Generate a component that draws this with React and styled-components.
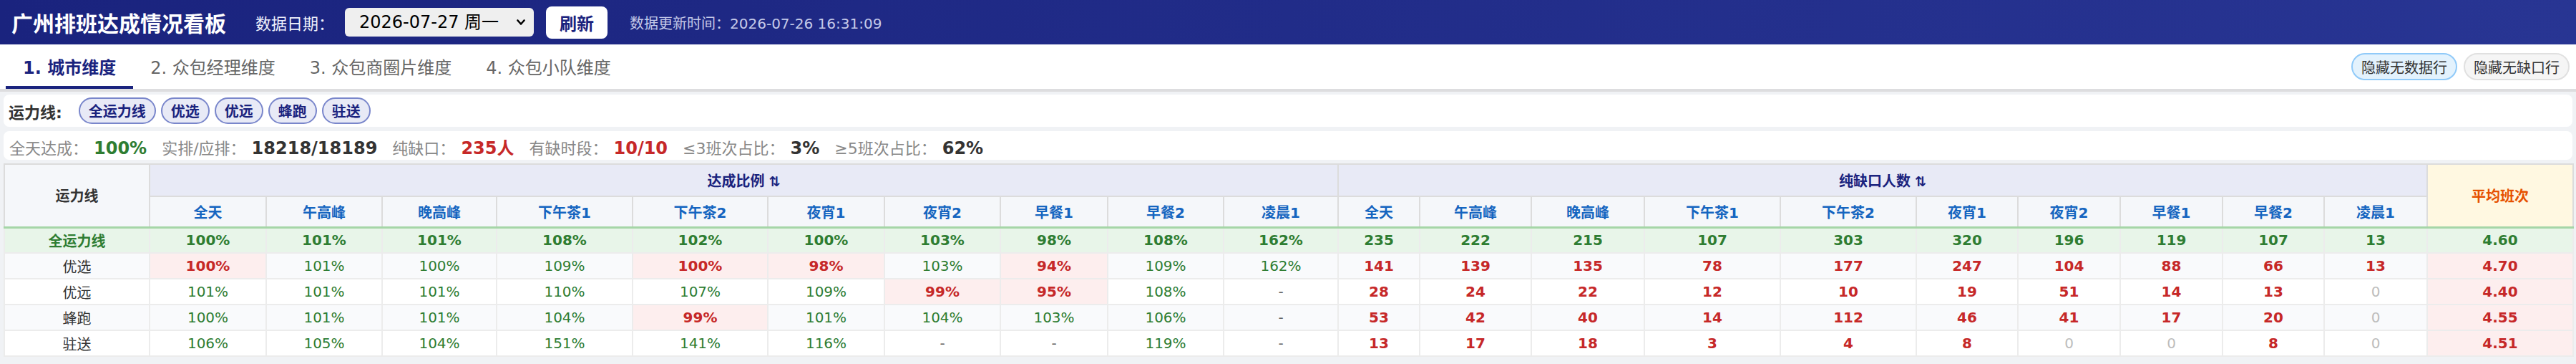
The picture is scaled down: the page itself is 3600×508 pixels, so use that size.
import React from "react";
import styled, { createGlobalStyle, css } from "styled-components";

const GlobalStyle = createGlobalStyle`
  html, body { margin: 0; padding: 0; background: #f0f2f5; }
  body {
    font-family: "DejaVu Sans", "Noto Sans CJK SC", sans-serif;
    color: #333;
  }
  * { box-sizing: border-box; }
`;

const Page = styled.div`
  width: 3600px;
  min-height: 508px;
  background: #f0f2f5;
`;

const Header = styled.header`
  height: 62px;
  display: flex;
  align-items: center;
  padding: 0 16px;
  background: linear-gradient(90deg, #1a237e 0%, #283593 100%);
  color: #fff;
`;

const Title = styled.h1`
  margin: 0 41px 0 0;
  font-size: 30px;
  font-weight: 700;
  white-space: nowrap;
`;

const DateLabel = styled.span`
  font-size: 22px;
  color: #eef0fb;
  margin-right: 15px;
`;

const SelectBox = styled.div`
  position: relative;
  width: 264px;
  height: 40px;
`;

const DateSelect = styled.select`
  appearance: none;
  width: 100%;
  height: 100%;
  border: none;
  border-radius: 6px;
  background: #efefef;
  color: #000;
  font-family: inherit;
  font-size: 24px;
  padding: 0 30px 0 20px;
  outline: none;
`;

const Chevron = styled.svg`
  position: absolute;
  right: 12px;
  top: 15px;
  width: 12px;
  height: 10px;
  pointer-events: none;
`;

const RefreshButton = styled.button`
  margin-left: 17px;
  height: 45px;
  padding: 0 19px;
  border: none;
  border-radius: 8px;
  background: #fff;
  color: #1a237e;
  font-family: inherit;
  font-size: 24px;
  font-weight: 700;
`;

const UpdateTime = styled.span`
  margin-left: 31px;
  font-size: 20px;
  color: #c5cae9;
  white-space: nowrap;
`;

const TabBar = styled.nav`
  height: 66px;
  display: flex;
  align-items: stretch;
  padding: 0 9px 0 8px;
  background: #fff;
  border-bottom: 4px solid #dddddf;
`;

const Tab = styled.div`
  display: flex;
  align-items: center;
  padding: 3px 24px 0;
  font-size: 24px;
  white-space: nowrap;
  border-bottom: 4px solid transparent;
  color: #666;
  ${(p) =>
    p.$active &&
    css`
      color: #1a237e;
      font-weight: 700;
      border-bottom-color: #1a237e;
    `}
`;

const Toggles = styled.div`
  margin-left: auto;
  display: flex;
  align-items: center;
  gap: 9px;
`;

const ToggleButton = styled.button`
  height: 38px;
  padding: 0 12px;
  border-radius: 19px;
  font-family: inherit;
  font-size: 20px;
  color: #333;
  border: 2px solid ${(p) => (p.$on ? "#90caf9" : "#e0e0e0")};
  background: ${(p) => (p.$on ? "#e3f2fd" : "#f5f5f5")};
`;

const Content = styled.main`
  padding: 4px 5px 10px;
  display: flex;
  flex-direction: column;
`;

const Card = styled.section`
  background: #fff;
  border-radius: 8px;
  display: flex;
  align-items: center;
`;

const FilterCard = styled(Card)`
  height: 45px;
  padding: 0 7px;
  gap: 7px;
`;

const FilterLabel = styled.span`
  font-size: 22px;
  font-weight: 700;
  color: #333;
  margin-right: 16px;
`;

const Pill = styled.button`
  height: 37px;
  padding: 0 12px;
  border-radius: 19px;
  border: 2px solid #7986cb;
  background: #e8eaf6;
  color: #1a237e;
  font-family: inherit;
  font-size: 20px;
  font-weight: 700;
`;

const StatsCard = styled(Card)`
  margin-top: 6px;
  height: 40px;
  padding: 0 8px;
  align-items: baseline;
  padding-top: 4px;
`;

const StatLabel = styled.span`
  font-size: 22px;
  color: #888;
  margin-right: 8px;
`;

const StatValue = styled.span`
  font-size: 24px;
  font-weight: 700;
  margin-right: 21px;
  color: ${(p) => p.$color || "#333"};
`;

const TableWrap = styled.div`
  margin-top: 5px;
  background: #fff;
`;

const Table = styled.table`
  width: 3590px;
  table-layout: fixed;
  border-collapse: collapse;
  border: 2px solid #dcdcdc;
  font-size: 20px;
  text-align: center;
`;

const GroupTh = styled.th`
  height: 45px;
  background: #e8eaf6;
  color: #1a237e;
  font-weight: 700;
  border: 2px solid #dcdcdc;
  padding: 0;
`;

const SortIcon = styled.span`
  font-size: 19px;
  margin-left: 6px;
`;

const CornerTh = styled.th`
  background: ${(p) => (p.$avg ? "#fff8e1" : "#f5f7fa")};
  color: ${(p) => (p.$avg ? "#e65100" : "#333")};
  font-weight: 700;
  border: 2px solid #dcdcdc;
  padding: 0;
`;

const SubTh = styled.th`
  height: 43px;
  background: #f5f7fa;
  color: #1565c0;
  font-weight: 700;
  border: 2px solid #dcdcdc;
  padding: 0;
`;

const tones = {
  total: css`
    color: #2e7d32;
    font-weight: 700;
  `,
  good: css`
    color: #2e7d32;
  `,
  alert: css`
    color: #c62828;
    font-weight: 700;
    background: #fdeeee;
  `,
  short: css`
    color: #c62828;
    font-weight: 700;
  `,
  zero: css`
    color: #bdbdbd;
  `,
  dash: css`
    color: #666;
  `,
  name: css`
    color: #333;
  `,
};

const Row = styled.tr`
  background: ${(p) => (p.$total ? "#e8f5e9" : p.$alt ? "#f9fafc" : "#fff")};
`;

const Cell = styled.td`
  height: 36px;
  padding: 0;
  border: 2px solid #ececec;
  ${(p) => p.$first && css`border-top: 3px solid #a5d6a7;`}
  ${(p) => tones[p.$tone]}
`;

const slots = ["全天", "午高峰", "晚高峰", "下午茶1", "下午茶2", "夜宵1", "夜宵2", "早餐1", "早餐2", "凌晨1"];
const rateWidths = [163, 162, 160, 190, 189, 163, 162, 150, 162, 160];
const gapWidths = [114, 156, 158, 190, 190, 142, 143, 143, 142, 144];

const rows = [
  {
    name: "全运力线",
    total: true,
    rates: ["100%", "101%", "101%", "108%", "102%", "100%", "103%", "98%", "108%", "162%"],
    gaps: ["235", "222", "215", "107", "303", "320", "196", "119", "107", "13"],
    avg: "4.60",
  },
  {
    name: "优选",
    rates: ["!100%", "101%", "100%", "109%", "!100%", "!98%", "103%", "!94%", "109%", "162%"],
    gaps: ["141", "139", "135", "78", "177", "247", "104", "88", "66", "13"],
    avg: "4.70",
  },
  {
    name: "优远",
    rates: ["101%", "101%", "101%", "110%", "107%", "109%", "!99%", "!95%", "108%", "-"],
    gaps: ["28", "24", "22", "12", "10", "19", "51", "14", "13", "0"],
    avg: "4.40",
  },
  {
    name: "蜂跑",
    rates: ["100%", "101%", "101%", "104%", "!99%", "101%", "104%", "103%", "106%", "-"],
    gaps: ["53", "42", "40", "14", "112", "46", "41", "17", "20", "0"],
    avg: "4.55",
  },
  {
    name: "驻送",
    rates: ["106%", "105%", "104%", "151%", "141%", "116%", "-", "-", "119%", "-"],
    gaps: ["13", "17", "18", "3", "4", "8", "0", "0", "8", "0"],
    avg: "4.51",
  },
];

function rateCell(v, total) {
  if (total) return { text: v, tone: "total" };
  if (v === "-") return { text: v, tone: "dash" };
  if (v.startsWith("!")) return { text: v.slice(1), tone: "alert" };
  return { text: v, tone: "good" };
}

function gapCell(v, total) {
  if (total) return { text: v, tone: "total" };
  if (v === "0") return { text: v, tone: "zero" };
  return { text: v, tone: "short" };
}

const stats = [
  { label: "全天达成：", value: "100%", color: "#2e7d32" },
  { label: "实排/应排：", value: "18218/18189" },
  { label: "纯缺口：", value: "235人", color: "#c62828" },
  { label: "有缺时段：", value: "10/10", color: "#c62828" },
  { label: "≤3班次占比：", value: "3%" },
  { label: "≥5班次占比：", value: "62%" },
];

export default function App() {
  return (
    <Page>
      <GlobalStyle />
      <Header>
        <Title>广州排班达成情况看板</Title>
        <DateLabel>数据日期：</DateLabel>
        <SelectBox>
          <DateSelect defaultValue="2026-07-27">
            <option value="2026-07-27">2026-07-27 周一</option>
            <option value="2026-07-26">2026-07-26 周日</option>
          </DateSelect>
          <Chevron viewBox="0 0 12 10">
            <path d="M1.5 2.5 L6 7.5 L10.5 2.5" fill="none" stroke="#000" strokeWidth="2.6" strokeLinecap="round" strokeLinejoin="round" />
          </Chevron>
        </SelectBox>
        <RefreshButton>刷新</RefreshButton>
        <UpdateTime>数据更新时间：2026-07-26 16:31:09</UpdateTime>
      </Header>

      <TabBar>
        <Tab $active>1. 城市维度</Tab>
        <Tab>2. 众包经理维度</Tab>
        <Tab>3. 众包商圈片维度</Tab>
        <Tab>4. 众包小队维度</Tab>
        <Toggles>
          <ToggleButton $on>隐藏无数据行</ToggleButton>
          <ToggleButton>隐藏无缺口行</ToggleButton>
        </Toggles>
      </TabBar>

      <Content>
        <FilterCard>
          <FilterLabel>运力线:</FilterLabel>
          {["全运力线", "优选", "优远", "蜂跑", "驻送"].map((p) => (
            <Pill key={p}>{p}</Pill>
          ))}
        </FilterCard>

        <StatsCard>
          {stats.map((s) => (
            <React.Fragment key={s.label}>
              <StatLabel>{s.label}</StatLabel>
              <StatValue $color={s.color}>{s.value}</StatValue>
            </React.Fragment>
          ))}
        </StatsCard>

        <TableWrap>
          <Table>
            <colgroup>
              <col style={{ width: 203 }} />
              {rateWidths.map((w, i) => (
                <col key={"r" + i} style={{ width: w }} />
              ))}
              {gapWidths.map((w, i) => (
                <col key={"g" + i} style={{ width: w }} />
              ))}
              <col style={{ width: 204 }} />
            </colgroup>
            <thead>
              <tr>
                <CornerTh rowSpan={2}>运力线</CornerTh>
                <GroupTh colSpan={10}>
                  达成比例<SortIcon>⇅</SortIcon>
                </GroupTh>
                <GroupTh colSpan={10}>
                  纯缺口人数<SortIcon>⇅</SortIcon>
                </GroupTh>
                <CornerTh rowSpan={2} $avg>
                  平均班次
                </CornerTh>
              </tr>
              <tr>
                {slots.map((s) => (
                  <SubTh key={"rh" + s}>{s}</SubTh>
                ))}
                {slots.map((s) => (
                  <SubTh key={"gh" + s}>{s}</SubTh>
                ))}
              </tr>
            </thead>
            <tbody>
              {rows.map((r, ri) => (
                <Row key={r.name} $total={r.total} $alt={ri % 2 === 1}>
                  <Cell $first={ri === 0} $tone={r.total ? "total" : "name"}>
                    {r.name}
                  </Cell>
                  {r.rates.map((v, i) => {
                    const c = rateCell(v, r.total);
                    return (
                      <Cell key={"r" + i} $first={ri === 0} $tone={c.tone}>
                        {c.text}
                      </Cell>
                    );
                  })}
                  {r.gaps.map((v, i) => {
                    const c = gapCell(v, r.total);
                    return (
                      <Cell key={"g" + i} $first={ri === 0} $tone={c.tone}>
                        {c.text}
                      </Cell>
                    );
                  })}
                  <Cell $first={ri === 0} $tone={r.total ? "total" : "alert"}>
                    {r.avg}
                  </Cell>
                </Row>
              ))}
            </tbody>
          </Table>
        </TableWrap>
      </Content>
    </Page>
  );
}
